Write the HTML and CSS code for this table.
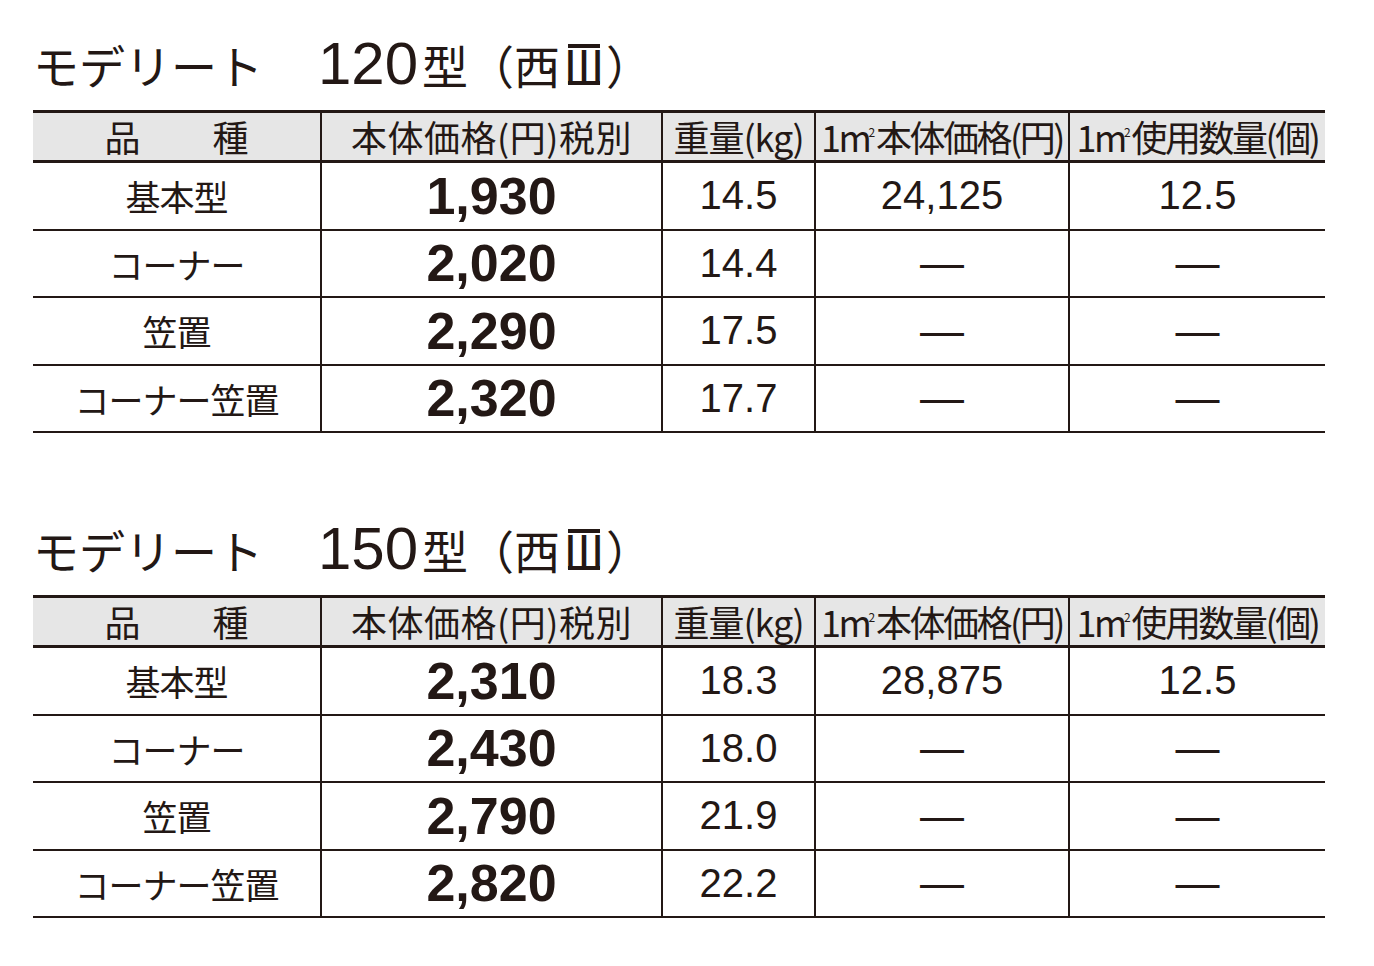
FILE: index.html
```html
<!DOCTYPE html>
<html lang="ja">
<head>
<meta charset="utf-8">
<link rel="stylesheet" href="styles.css">
</head>
<body>
<div class="page">
  <section class="block">
    <h1 class="title">モデリート<span class="gap"></span><span class="num">120</span><span class="kata">型</span>（西<span class="roman"><span class="g">Ⅲ</span></span>）</h1>
    <table class="spec">
      <colgroup>
        <col class="c1"><col class="c2"><col class="c3"><col class="c4"><col class="c5">
      </colgroup>
      <thead>
        <tr>
          <th><div class="hd"><span class="hin">品</span><span class="hin">種</span></div></th>
          <th><div class="hd wide">本体価格(円)税別</div></th>
          <th><div class="hd mid">重量(kg)</div></th>
          <th><div class="hd tight">1m<span class="sq">2</span>本体価格(円)</div></th>
          <th><div class="hd tight">1m<span class="sq">2</span>使用数量(個)</div></th>
        </tr>
      </thead>
      <tbody>
        <tr><td class="jp">基本型</td><td class="price">1,930</td><td class="n">14.5</td><td class="n">24,125</td><td class="n">12.5</td></tr>
        <tr><td class="jp">コーナー</td><td class="price">2,020</td><td class="n">14.4</td><td class="n dash">—</td><td class="n dash">—</td></tr>
        <tr><td class="jp">笠置</td><td class="price">2,290</td><td class="n">17.5</td><td class="n dash">—</td><td class="n dash">—</td></tr>
        <tr><td class="jp">コーナー笠置</td><td class="price">2,320</td><td class="n">17.7</td><td class="n dash">—</td><td class="n dash">—</td></tr>
      </tbody>
    </table>
  </section>
  <section class="block">
    <h1 class="title">モデリート<span class="gap"></span><span class="num">150</span><span class="kata">型</span>（西<span class="roman"><span class="g">Ⅲ</span></span>）</h1>
    <table class="spec">
      <colgroup>
        <col class="c1"><col class="c2"><col class="c3"><col class="c4"><col class="c5">
      </colgroup>
      <thead>
        <tr>
          <th><div class="hd"><span class="hin">品</span><span class="hin">種</span></div></th>
          <th><div class="hd wide">本体価格(円)税別</div></th>
          <th><div class="hd mid">重量(kg)</div></th>
          <th><div class="hd tight">1m<span class="sq">2</span>本体価格(円)</div></th>
          <th><div class="hd tight">1m<span class="sq">2</span>使用数量(個)</div></th>
        </tr>
      </thead>
      <tbody>
        <tr><td class="jp">基本型</td><td class="price">2,310</td><td class="n">18.3</td><td class="n">28,875</td><td class="n">12.5</td></tr>
        <tr><td class="jp">コーナー</td><td class="price">2,430</td><td class="n">18.0</td><td class="n dash">—</td><td class="n dash">—</td></tr>
        <tr><td class="jp">笠置</td><td class="price">2,790</td><td class="n">21.9</td><td class="n dash">—</td><td class="n dash">—</td></tr>
        <tr><td class="jp">コーナー笠置</td><td class="price">2,820</td><td class="n">22.2</td><td class="n dash">—</td><td class="n dash">—</td></tr>
      </tbody>
    </table>
  </section>
</div>
</body>
</html>
```
FILE: styles.css
```css
html, body {
  margin: 0;
  padding: 0;
  background: #ffffff;
}
body {
  color: #231815;
  font-family: "Noto Sans CJK JP", "Liberation Sans", sans-serif;
}
.page {
  padding-left: 33px;
  width: 1292px;
}
.block {
  height: 485px;
}
.title {
  margin: 0;
  height: 110px;
  box-sizing: border-box;
  padding-top: 34px;
  font-size: 46px;
  font-weight: 400;
  line-height: 60px;
  white-space: nowrap;
  letter-spacing: 0;
}
.title .gap {
  display: inline-block;
  width: 55px;
}
.title .num {
  font-family: "Liberation Sans", sans-serif;
  font-size: 60px;
}
.title .kata {
  margin-left: 4px;
}
.title .roman {
  display: inline-block;
  height: 33px;
  line-height: 33px;
  border-top: 4px solid #231815;
  border-bottom: 4px solid #231815;
  vertical-align: baseline;
  margin: 0 6px 0 8px;
  font-size: 46px;
}
.title .roman .g {
  margin: 0 -7px;
}
.spec {
  border-collapse: collapse;
  table-layout: fixed;
  width: 1292px;
}
.c1 { width: 288px; }
.c2 { width: 341px; }
.c3 { width: 153px; }
.c4 { width: 254px; }
.c5 { width: 256px; }
.spec th {
  background: #e6e6e6;
  padding: 0;
  border-top: 3px solid #231815;
  border-bottom: 3px solid #231815;
  border-left: 2px solid #231815;
  font-weight: 400;
  vertical-align: middle;
}
.spec th:first-child { border-left: none; }
.hd {
  height: 47px;
  line-height: 47px;
  font-size: 36px;
  white-space: nowrap;
  text-align: center;
}
.hd.wide { letter-spacing: 0.5px; }
.hd.mid { letter-spacing: -1px; }
.hd.tight { letter-spacing: -2.5px; }
.hin {
  display: inline-block;
  margin: 0 36px;
}
.sq {
  position: relative;
  top: -15px;
  font-size: 12px;
  letter-spacing: 0;
  margin-left: -1px;
  margin-right: 1px;
}
.spec td {
  height: 65.5px;
  padding: 0;
  border-bottom: 2px solid #231815;
  border-left: 2px solid #231815;
  text-align: center;
  white-space: nowrap;
}
.spec td:first-child { border-left: none; }
.spec td.jp {
  font-size: 35px;
  letter-spacing: -1px;
}
.spec td.price {
  font-family: "Liberation Sans", sans-serif;
  font-weight: 700;
  font-size: 52px;
}
.spec td.n {
  font-family: "Liberation Sans", sans-serif;
  font-size: 40px;
}
.spec td.dash {
  font-size: 44px;
}
```
